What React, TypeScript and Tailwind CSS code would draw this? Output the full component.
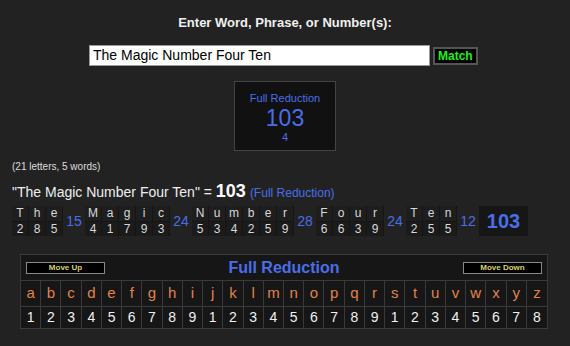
import React from 'react'

const words = [
  { letters: ['T', 'h', 'e'], vals: [2, 8, 5], sum: 15 },
  { letters: ['M', 'a', 'g', 'i', 'c'], vals: [4, 1, 7, 9, 3], sum: 24 },
  { letters: ['N', 'u', 'm', 'b', 'e', 'r'], vals: [5, 3, 4, 2, 5, 9], sum: 28 },
  { letters: ['F', 'o', 'u', 'r'], vals: [6, 6, 3, 9], sum: 24 },
  { letters: ['T', 'e', 'n'], vals: [2, 5, 5], sum: 12 },
]

const alphabet = 'abcdefghijklmnopqrstuvwxyz'.split('')
const reduction = alphabet.map((_, i) => (i % 9) + 1)

const font = { fontFamily: '"Liberation Sans", Arial, sans-serif' }

export default function App() {
  return (
    <div className="w-[570px] h-[346px] bg-[#222222] text-white overflow-hidden" style={font}>
      <div className="pt-[15px] text-center text-[13px] font-bold leading-[16px] text-[#f0f0f0]">
        Enter Word, Phrase, or Number(s):
      </div>

      <div className="mt-[14px] flex items-center pl-[89px] gap-[3px]">
        <div className="w-[341px] h-[21px] bg-white border border-[#999] flex items-center px-[3px] text-[14px] text-black">
          The Magic Number Four Ten
        </div>
        <div className="h-[18px] px-[3px] bg-black border-2 border-[#555] flex items-center text-[12px] font-bold text-[#22ee22] leading-none">
          Match
        </div>
      </div>

      <div className="mt-[15px] mx-auto w-[102px] h-[70px] bg-[#111111] border border-[#444] flex flex-col items-center text-[#4a6ee8]">
        <div className="mt-[10px] text-[11px] leading-[13px]">Full Reduction</div>
        <div className="text-[23px] leading-[26px]">103</div>
        <div className="text-[11px] leading-[12px]">4</div>
      </div>

      <div className="mt-[10px] ml-[12px] text-[10px] leading-[12px] text-[#dddddd]">(21 letters, 5 words)</div>

      <div className="mt-[9px] ml-[12px] flex items-baseline text-[14px] leading-[18px] text-[#eeeeee]">
        <span>"The Magic Number Four Ten" =&nbsp;</span>
        <span className="text-[18px] font-bold text-white">103</span>
        <span className="ml-[4px] text-[12px] text-[#4a6ee8]">(Full Reduction)</span>
      </div>

      <div className="mt-[4px] ml-[12px] flex h-[30px] text-[12px]">
        {words.map((w, wi) => (
          <React.Fragment key={wi}>
            {w.letters.map((l, li) => (
              <div key={li} className="w-[17px] flex flex-col border-r border-[#151515]">
                <div className="h-[15px] bg-[#1e1e1e] text-center leading-[15px] text-[#d8d8d8]">{l}</div>
                <div className="h-[15px] bg-[#1b1b1b] border-t border-[#151515] text-center leading-[14px] text-[#d8d8d8]">{w.vals[li]}</div>
              </div>
            ))}
            <div className="w-[22px] flex items-center justify-center text-[14px] text-[#4a6ee8]">{w.sum}</div>
          </React.Fragment>
        ))}
        <div className="w-[49px] bg-[#161616] flex items-center justify-center text-[20px] font-bold text-[#4a6ee8]">103</div>
      </div>

      <div className="mt-[18px] ml-[20px] w-[528px] bg-[#161616] border border-[#3a3a3a]">
        <div className="h-[26px] flex items-center justify-between px-[5px] border-b border-[#3a3a3a]">
          <div className="w-[79px] h-[12px] bg-black border border-[#888] flex items-center justify-center text-[8px] font-bold text-[#d8d070] leading-none">
            Move Up
          </div>
          <div className="text-[16px] font-bold text-[#4a6ee8] leading-none pt-[1px]">Full Reduction</div>
          <div className="w-[79px] h-[12px] bg-black border border-[#888] flex items-center justify-center text-[8px] font-bold text-[#d8d070] leading-none">
            Move Down
          </div>
        </div>
        <div className="grid grid-cols-[repeat(26,1fr)] border-b border-[#3a3a3a]">
          {alphabet.map((c, i) => (
            <div key={c} className={`h-[25px] flex items-center justify-center text-[15px] text-[#e0844c] ${i < 25 ? 'border-r border-[#3a3a3a]' : ''}`}>
              {c}
            </div>
          ))}
        </div>
        <div className="grid grid-cols-[repeat(26,1fr)]">
          {reduction.map((n, i) => (
            <div key={i} className={`h-[21px] flex items-center justify-center text-[14px] text-[#f0f0f0] ${i < 25 ? 'border-r border-[#3a3a3a]' : ''}`}>
              {n}
            </div>
          ))}
        </div>
      </div>
    </div>
  )
}
